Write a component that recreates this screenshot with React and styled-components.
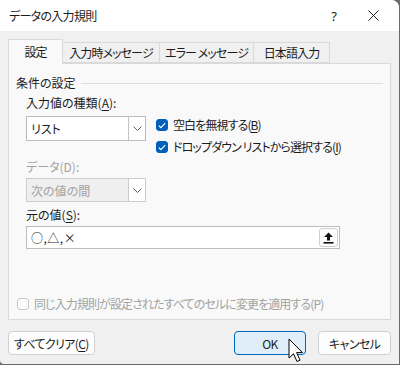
import React from 'react';
import styled, { createGlobalStyle } from 'styled-components';

const Global = createGlobalStyle`
  html, body { margin: 0; padding: 0; background: #6b6b6b; }
  body {
    font-family: "Noto Sans CJK JP", "Noto Sans", sans-serif;
    font-size: 12px;
    color: #1b1b1b;
    font-feature-settings: "palt";
  }
  * { box-sizing: border-box; }
`;

const Window = styled.div`
  position: relative;
  width: 399px;
  height: 364px;
  background: #f0f0f0;
  border-top-right-radius: 8px;
  border-bottom-left-radius: 4px;
  overflow: hidden;
  display: flex;
  flex-direction: column;
`;

const TitleBar = styled.div`
  height: 31px;
  background: #ffffff;
  display: flex;
  align-items: center;
  padding-left: 9px;
  flex-shrink: 0;
`;

const Title = styled.div`
  flex: 1;
  font-size: 12px;
  line-height: 16px;
  letter-spacing: -0.7px;
  color: #1b1b1b;
`;

const TitleButton = styled.div`
  width: ${p => p.$w}px;
  height: 31px;
  display: flex;
  align-items: center;
  justify-content: center;
  font-family: "Noto Sans", sans-serif;
  font-size: 13px;
  color: #1b1b1b;
`;

const Body = styled.div`
  flex: 1;
  display: flex;
  flex-direction: column;
  padding: 8px 8px 0 8px;
`;

const Tabs = styled.div`
  display: flex;
  align-items: flex-end;
  height: 24px;
  position: relative;
  z-index: 1;
`;

const Tab = styled.div`
  width: ${p => p.$w}px;
  height: ${p => (p.$active ? 25 : 21)}px;
  margin-bottom: ${p => (p.$active ? -1 : 0)}px;
  background: ${p => (p.$active ? '#f9f9f9' : '#f0f0f0')};
  border: 1px solid #d9d9d9;
  border-bottom: ${p => (p.$active ? 'none' : '1px solid #d9d9d9')};
  border-left: ${p => (p.$first ? '1px solid #d9d9d9' : 'none')};
  display: flex;
  align-items: ${p => (p.$active ? 'flex-start' : 'center')};
  padding-top: ${p => (p.$active ? 4 : 0)}px;
  justify-content: center;
  font-size: 12px;
  line-height: 16px;
  letter-spacing: -0.9px;
  white-space: nowrap;
`;

const Panel = styled.div`
  height: 257px;
  background: #f9f9f9;
  border: 1px solid #d9d9d9;
  padding: 11px 7px 7px 7px;
  display: flex;
  flex-direction: column;
`;

const GroupHead = styled.div`
  display: flex;
  align-items: center;
  line-height: 16px;
  height: 16px;
`;

const GroupLine = styled.div`
  flex: 1;
  height: 1px;
  background: #dedede;
  margin: 0 0 0 5px;
`;

const Content = styled.div`
  padding-left: 10px;
  display: flex;
  flex-direction: column;
`;

const Label = styled.div`
  line-height: 16px;
  margin-top: ${p => p.$mt}px;
  margin-bottom: ${p => p.$mb}px;
  color: ${p => (p.$disabled ? '#a2a2a2' : '#1b1b1b')};
`;

const U = styled.span`
  text-decoration: underline;
  text-underline-offset: 2px;
`;

const Row = styled.div`
  display: flex;
  align-items: flex-start;
  gap: 10px;
`;

const Select = styled.div`
  width: 120px;
  height: ${p => p.$h}px;
  display: flex;
  border: 1px solid ${p => (p.$disabled ? '#cdcdcd' : '#bcbcbc')};
  background: ${p => (p.$disabled ? '#efefef' : '#ffffff')};
  color: ${p => (p.$disabled ? '#a2a2a2' : '#1b1b1b')};
`;

const SelectText = styled.div`
  flex: 1;
  display: flex;
  align-items: center;
  padding-left: 4px;
  font-size: 12px;
`;

const SelectButton = styled.div`
  width: 17px;
  border-left: 1px solid ${p => (p.$disabled ? '#cdcdcd' : '#c4c4c4')};
  background: #ffffff;
  display: flex;
  align-items: center;
  justify-content: center;
`;

const Checks = styled.div`
  display: flex;
  flex-direction: column;
  gap: 6px;
  padding-top: 1px;
`;

const CheckRow = styled.div`
  display: flex;
  align-items: center;
  gap: 5px;
  line-height: 16px;
  color: ${p => (p.$disabled ? '#a2a2a2' : '#1b1b1b')};
`;

const CheckText = styled.span`
  letter-spacing: -0.9px;
  white-space: nowrap;
`;

const Box = styled.div`
  width: 12px;
  height: 12px;
  border-radius: 3px;
  flex-shrink: 0;
  display: flex;
  align-items: center;
  justify-content: center;
  background: ${p => (p.$checked ? '#005fb8' : '#fbfbfb')};
  border: 1px solid ${p => (p.$checked ? '#005fb8' : '#c8c8c8')};
`;

const Input = styled.div`
  width: 314px;
  height: 23px;
  border: 1px solid #bcbcbc;
  background: #ffffff;
  display: flex;
  align-items: center;
  padding: 0 1px 0 4px;
`;

const InputText = styled.div`
  flex: 1;
  font-size: 12px;
  letter-spacing: 0.5px;
`;

const RefButton = styled.div`
  width: 19px;
  height: 19px;
  border: 1px solid #cfcfcf;
  border-radius: 3px;
  background: #fdfdfd;
  display: flex;
  align-items: center;
  justify-content: center;
`;

const Bottom = styled.div`
  margin-top: auto;
  padding-left: 1px;
`;

const Buttons = styled.div`
  display: flex;
  margin-top: 11px;
  gap: 12px;
`;

const Button = styled.div`
  width: ${p => p.$w}px;
  height: 24px;
  border-radius: 4px;
  border: 1px solid ${p => (p.$primary ? '#0067c0' : '#d0d0d0')};
  background: ${p => (p.$primary ? '#e0eef9' : '#fdfdfd')};
  display: flex;
  align-items: center;
  justify-content: center;
  font-size: 12px;
  margin-right: ${p => p.$mr || 0}px;
  color: #1b1b1b;
`;

const ButtonText = styled.span`
  letter-spacing: -0.6px;
  white-space: nowrap;
`;

const Cursor = styled.svg`
  position: absolute;
  left: 288px;
  top: 338px;
`;

const Chevron = ({ color }) => (
  <svg width="9" height="5" viewBox="0 0 9 5">
    <path d="M0.5 0.5 L4.5 4.5 L8.5 0.5" fill="none" stroke={color} strokeWidth="1" />
  </svg>
);

const Check = () => (
  <svg width="8" height="7" viewBox="0 0 8 7">
    <path d="M0.8 3.6 L2.9 5.6 L7.2 1.2" fill="none" stroke="#ffffff" strokeWidth="1.2" />
  </svg>
);

export default function App() {
  return (
    <>
      <Global />
      <Window>
        <TitleBar>
          <Title>データの入力規則</Title>
          <TitleButton $w={26}>?</TitleButton>
          <TitleButton $w={52}>
            <svg width="11" height="11" viewBox="0 0 11 11">
              <path d="M0.5 0.5 L10.5 10.5 M10.5 0.5 L0.5 10.5" stroke="#1b1b1b" strokeWidth="1" />
            </svg>
          </TitleButton>
        </TitleBar>
        <Body>
          <Tabs>
            <Tab $w={55} $active $first>設定</Tab>
            <Tab $w={97}>入力時メッセージ</Tab>
            <Tab $w={94}>エラー メッセージ</Tab>
            <Tab $w={76}>日本語入力</Tab>
          </Tabs>
          <Panel>
            <GroupHead>
              <span>条件の設定</span>
              <GroupLine />
            </GroupHead>
            <Content>
              <Label $mt={4} $mb={5}>入力値の種類(<U>A</U>):</Label>
              <Row>
                <Select $h={25}>
                  <SelectText>リスト</SelectText>
                  <SelectButton><Chevron color="#606060" /></SelectButton>
                </Select>
                <Checks>
                  <CheckRow>
                    <Box $checked><Check /></Box>
                    <CheckText>空白を無視する(<U>B</U>)</CheckText>
                  </CheckRow>
                  <CheckRow>
                    <Box $checked><Check /></Box>
                    <CheckText>ドロップダウン リストから選択する(<U>I</U>)</CheckText>
                  </CheckRow>
                </Checks>
              </Row>
              <Label $mt={4} $mb={3} $disabled>データ(D):</Label>
              <Select $h={24} $disabled>
                <SelectText>次の値の間</SelectText>
                <SelectButton $disabled><Chevron color="#606060" /></SelectButton>
              </Select>
              <Label $mt={5} $mb={3}>元の値(<U>S</U>):</Label>
              <Input>
                <InputText>○,△,×</InputText>
                <RefButton>
                  <svg width="11" height="12" viewBox="0 0 11 12">
                    <path d="M5.5 0.5 L10 5 L7 5 L7 8.5 L4 8.5 L4 5 L1 5 Z" fill="#111" />
                    <rect x="0.5" y="10" width="10" height="1.6" fill="#111" />
                  </svg>
                </RefButton>
              </Input>
            </Content>
            <Bottom>
              <CheckRow $disabled>
                <Box />
                <CheckText>同じ入力規則が設定されたすべてのセルに変更を適用する(P)</CheckText>
              </CheckRow>
            </Bottom>
          </Panel>
          <Buttons>
            <Button $w={87} $mr={127}><ButtonText>すべてクリア(<U>C</U>)</ButtonText></Button>
            <Button $w={73} $primary><ButtonText>OK</ButtonText></Button>
            <Button $w={73}><ButtonText>キャンセル</ButtonText></Button>
          </Buttons>
        </Body>
        <Cursor width="16" height="26" viewBox="0 0 16 26">
          <path d="M1 1 L1 20 L5.5 15.8 L9 23.5 L12 22.2 L8.6 14.6 L14.5 14.6 Z" fill="#ffffff" stroke="#000000" strokeWidth="1" strokeLinejoin="miter" />
        </Cursor>
      </Window>
    </>
  );
}
